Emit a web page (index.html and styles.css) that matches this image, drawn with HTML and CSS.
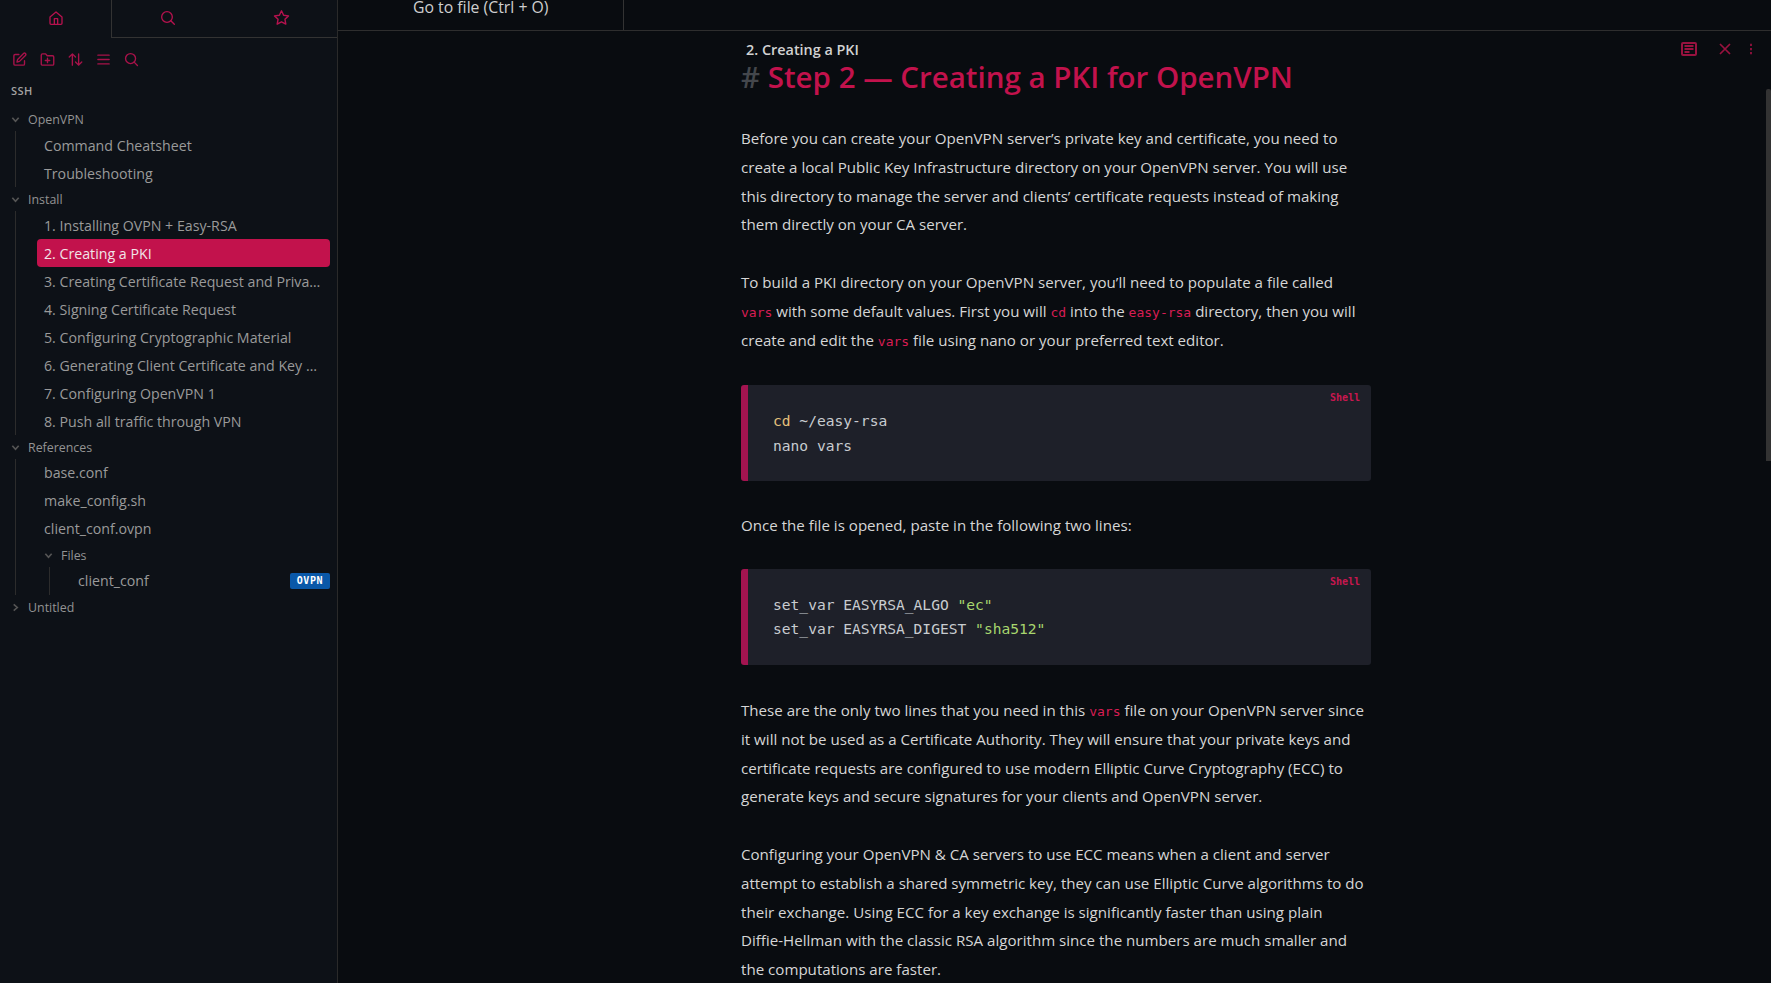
FILE: index.html
```html
<!DOCTYPE html>
<html lang="en">
<head>
<meta charset="utf-8">
<title>2. Creating a PKI</title>
<link rel="stylesheet" href="styles.css">
</head>
<body>
<div class="app">
  <aside class="sidebar">
    <div class="side-tabs">
      <div class="side-tab active">
        <svg class="ico" viewBox="0 0 24 24"><path d="M3 10.500 12 3l9 7.500V20a1.500 1.500 0 0 1-1.500 1.500h-15A1.500 1.500 0 0 1 3 20z"/><path d="M9.500 21.500V13h5v8.500"/></svg>
      </div>
      <div class="side-tab">
        <svg class="ico" viewBox="0 0 24 24"><circle cx="10.500" cy="10.500" r="8"/><path d="m21.500 21.500-5.300-5.300"/></svg>
      </div>
      <div class="side-tab">
        <svg class="ico star" viewBox="0 0 24 24"><path d="m12 2.500 3 6.300 6.900.9-5 4.800 1.200 6.900-6.100-3.300-6.100 3.300 1.200-6.900-5-4.800 6.900-.9z"/></svg>
      </div>
    </div>
    <div class="side-tools">
      <svg class="tool" viewBox="0 0 24 24"><path d="M20 14v5a2 2 0 0 1-2 2H5a2 2 0 0 1-2-2V6a2 2 0 0 1 2-2h6"/><path d="M18.500 2.500a2.100 2.100 0 0 1 3 3L12 15l-4 1 1-4z"/></svg>
      <svg class="tool" viewBox="0 0 24 24"><path d="M22 19a2 2 0 0 1-2 2H4a2 2 0 0 1-2-2V5a2 2 0 0 1 2-2h5l2.500 3H20a2 2 0 0 1 2 2z"/><path d="M12 10v7M8.500 13.500h7"/></svg>
      <svg class="tool" viewBox="0 0 24 24"><path d="M7 21V3M2 8l5-5 5 5"/><path d="M17 3v18M12 16l5 5 5-5"/></svg>
      <svg class="tool" viewBox="0 0 24 24"><path d="M3 5h18M3 12h18M3 19h18"/></svg>
      <svg class="tool" viewBox="0 0 24 24"><circle cx="10.500" cy="10.500" r="8"/><path d="m21.500 21.500-5.300-5.300"/></svg>
    </div>
    <div class="vault">SSH</div>
    <nav class="tree">
      <div class="folder"><svg class="chev" viewBox="0 0 10 10"><path d="m1.500 3 3.500 4 3.500-4"/></svg><span>OpenVPN</span></div>
      <div class="group">
        <div class="file">Command Cheatsheet</div>
        <div class="file">Troubleshooting</div>
      </div>
      <div class="folder"><svg class="chev" viewBox="0 0 10 10"><path d="m1.500 3 3.500 4 3.500-4"/></svg><span>Install</span></div>
      <div class="group">
        <div class="file">1. Installing OVPN + Easy-RSA</div>
        <div class="file selected">2. Creating a PKI</div>
        <div class="file">3. Creating Certificate Request and Private Key</div>
        <div class="file">4. Signing Certificate Request</div>
        <div class="file">5. Configuring Cryptographic Material</div>
        <div class="file">6. Generating Client Certificate and Key Pair</div>
        <div class="file">7. Configuring OpenVPN 1</div>
        <div class="file">8. Push all traffic through VPN</div>
      </div>
      <div class="folder"><svg class="chev" viewBox="0 0 10 10"><path d="m1.500 3 3.500 4 3.500-4"/></svg><span>References</span></div>
      <div class="group refs">
        <div class="file">base.conf</div>
        <div class="file">make_config.sh</div>
        <div class="file">client_conf.ovpn</div>
        <div class="folder"><svg class="chev" viewBox="0 0 10 10"><path d="m1.500 3 3.500 4 3.500-4"/></svg><span>Files</span></div>
        <div class="group">
          <div class="file"><span class="file-name">client_conf</span><span class="badge">OVPN</span></div>
        </div>
      </div>
      <div class="folder"><svg class="chev" viewBox="0 0 10 10"><path d="m3 1.500 4 3.500-4 3.500"/></svg><span>Untitled</span></div>
    </nav>
  </aside>
  <main class="main">
    <div class="tabbar"><div class="tab">Go to file (Ctrl + O)</div></div>
    <div class="note-actions">
      <svg class="act reader" viewBox="0 0 16 14"><rect x="1" y="1" width="14" height="12" rx="1"/><path d="M3.500 4h9M3.500 7h9M3.500 10h5"/></svg>
      <svg class="act" viewBox="0 0 16 16"><path d="m3 3 10 10M13 3 3 13"/></svg>
      <svg class="act dots" viewBox="0 0 16 16"><path d="M8 2v2.500M8 6.800v2.500M8 11.500V14"/></svg>
    </div>
    <article class="note">
      <div class="inline-title">2. Creating a PKI</div>
      <h1 class="heading"><span class="hash">#</span> Step 2 — Creating a PKI for OpenVPN</h1>
      <p>Before you can create your OpenVPN server’s private key and certificate, you need to<br>create a local Public Key Infrastructure directory on your OpenVPN server. You will use<br>this directory to manage the server and clients’ certificate requests instead of making<br>them directly on your CA server.</p>
      <p>To build a PKI directory on your OpenVPN server, you’ll need to populate a file called<br><code>vars</code> with some default values. First you will <code>cd</code> into the <code>easy-rsa</code> directory, then you will<br>create and edit the <code>vars</code> file using nano or your preferred text editor.</p>
      <div class="codeblock first">
        <span class="lang">Shell</span>
        <pre><span class="kw">cd</span> ~/easy-rsa
nano vars</pre>
      </div>
      <p>Once the file is opened, paste in the following two lines:</p>
      <div class="codeblock second">
        <span class="lang">Shell</span>
        <pre>set_var EASYRSA_ALGO <span class="str">"ec"</span>
set_var EASYRSA_DIGEST <span class="str">"sha512"</span></pre>
      </div>
      <p>These are the only two lines that you need in this <code>vars</code> file on your OpenVPN server since<br>it will not be used as a Certificate Authority. They will ensure that your private keys and<br>certificate requests are configured to use modern Elliptic Curve Cryptography (ECC) to<br>generate keys and secure signatures for your clients and OpenVPN server.</p>
      <p>Configuring your OpenVPN &amp; CA servers to use ECC means when a client and server<br>attempt to establish a shared symmetric key, they can use Elliptic Curve algorithms to do<br>their exchange. Using ECC for a key exchange is significantly faster than using plain<br>Diffie-Hellman with the classic RSA algorithm since the numbers are much smaller and<br>the computations are faster.</p>
    </article>
    <div class="scrollthumb"></div>
  </main>
</div>
</body>
</html>
```

FILE: styles.css
```css
* { box-sizing: border-box; }
html, body { margin: 0; height: 100%; overflow: hidden; background: #090c10; }
body { font-family: "Open Sans", "Noto Sans", sans-serif; color: #d4d4d4; }
.app { display: flex; height: 983px; }

.sidebar { width: 338px; flex: none; background: #0d1117; border-right: 1px solid #2a2a2a; display: flex; flex-direction: column; }
.side-tabs { display: flex; height: 38px; flex: none; }
.side-tab { flex: 1; display: flex; align-items: center; justify-content: center; border-bottom: 1px solid #333; padding-bottom: 2px; }
.side-tab.active { flex: none; width: 112px; border-bottom: 0; border-right: 1px solid #333; }
.ico { width: 16px; height: 16px; fill: none; stroke: #b5124e; stroke-width: 2; stroke-linecap: round; stroke-linejoin: round; }
.ico.star { width: 17px; height: 17px; margin-left: 2px; }

.side-tools { display: flex; gap: 13px; padding: 14px 0 0 12px; height: 44px; flex: none; }
.tool { width: 15px; height: 15px; fill: none; stroke: #a8124a; stroke-width: 2.200; stroke-linecap: round; stroke-linejoin: round; }

.vault { font-size: 11px; font-weight: 600; letter-spacing: .5px; color: #a3a3a3; padding: 1px 0 0 11px; height: 25px; line-height: 16px; }

.tree { font-size: 14.200px; color: #9a9a9a; padding-right: 7px; }
.folder { height: 24px; display: flex; align-items: center; gap: 8px; font-size: 12.400px; color: #939393; padding-left: 11px; }
.chev { width: 9px; height: 9px; fill: none; stroke: #555; stroke-width: 1.800; flex: none; }
.group { margin-left: 15px; border-left: 1px solid #2c2c2c; }
.file { height: 28px; line-height: 29px; padding: 0 8px 0 28px; white-space: nowrap; overflow: hidden; text-overflow: ellipsis; }
.refs .file { line-height: 28px; }
.group .folder { padding-left: 28px; }
.group .group { margin-left: 33px; }
.group .group .file { padding: 0 0 0 28px; display: flex; justify-content: space-between; align-items: center; }
.file-name { padding-bottom: 1px; }
.selected { margin-left: 21px; padding-left: 7px; background: #c2124c; color: #f1e4e8; border-radius: 4px; }
.badge { background: #0a58a8; color: #fff; font-family: "DejaVu Sans Mono", monospace; font-weight: 700; font-size: 10px; letter-spacing: .6px; width: 40px; height: 16px; line-height: 16px; text-align: center; border-radius: 2px; flex: none; }

.main { flex: 1; position: relative; overflow: hidden; min-width: 0; }
.tabbar { height: 31px; border-bottom: 1px solid #2e2e2e; overflow: hidden; }
.tab { width: 286px; height: 30px; border-right: 1px solid #333; font-size: 15.800px; color: #cfcfcf; padding-left: 75px; line-height: 15px; }
.note-actions { position: absolute; top: 41px; right: 13px; display: flex; align-items: center; }
.act { width: 16px; height: 16px; fill: none; stroke: #98123f; stroke-width: 1.700; margin-left: 20px; }
.act.reader { stroke-width: 2; height: 14px; }
.act.dots { width: 14px; height: 16px; margin-left: 11px; stroke-width: 2; }
.scrollthumb { position: absolute; right: 0; top: 89px; width: 5px; height: 372px; background: #333; border-radius: 2px 2px 0 0; }

.note { width: 630px; margin-left: 403px; padding-top: 9px; }
.inline-title { font-size: 14.400px; font-weight: 600; color: #d2d2d2; padding-left: 5px; line-height: 20px; }
.heading { margin: -1px 0 0; font-size: 29.500px; font-weight: 600; line-height: 36px; color: #c2124c; }
.hash { color: #44474c; }
p { margin: 0 0 28.800px; font-size: 15.120px; line-height: 28.800px; color: #d6d6d6; white-space: nowrap; }
.heading + p { margin-top: 29px; }
code { font-family: "DejaVu Sans Mono", monospace; font-size: 13px; line-height: 1; color: #d81d54; }
.codeblock { position: relative; height: 96px; background: #1e2029; border-left: 7px solid #a31450; border-radius: 3px; padding: 24px 25px; margin: 0 0 30px; }
.codeblock.first { margin-top: 31px; }
.codeblock.second { margin-top: 28px; margin-bottom: 31px; }
.codeblock pre { margin: 0; font-family: "DejaVu Sans Mono", monospace; font-size: 14.600px; line-height: 24.500px; color: #c8ccd0; }
.kw { color: #e5c07b; }
.str { color: #a8d66e; }
.lang { position: absolute; top: 7px; right: 11px; font-family: "DejaVu Sans Mono", monospace; font-size: 10px; font-weight: 700; color: #c8174f; }
```
